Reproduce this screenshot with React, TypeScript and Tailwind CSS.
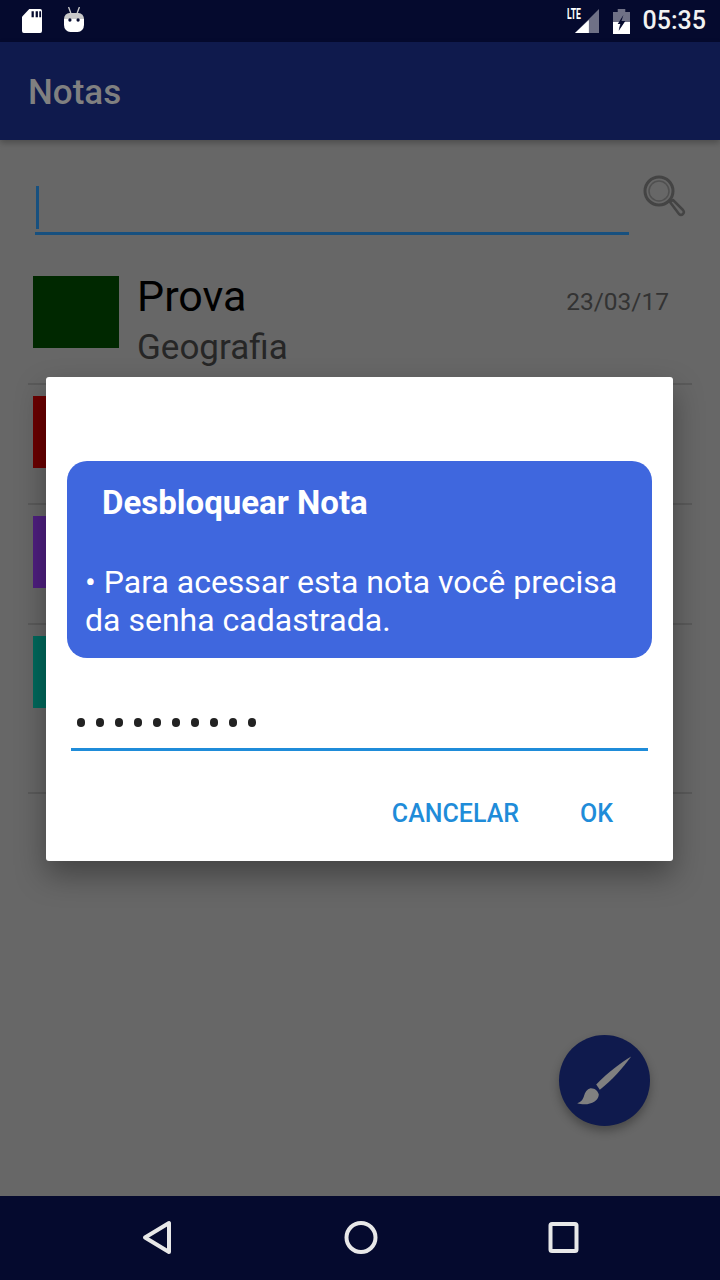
import React from "react";

function Row({ color, title, sub, date, h = "h-[120px]" }: { color: string; title?: string; sub?: string; date?: string; h?: string }) {
  return (
    <div className={`${h} mx-[28px] border-b-2 border-[#5a5a5a] flex items-start pt-[11px] pl-[5px]`}>
      <div className={`w-[86px] h-[72px] shrink-0 ${color}`} />
      {title && (
        <div className="ml-[18px] flex-1 flex flex-col">
          <div className="flex justify-between items-start">
            <span className="text-[43px] leading-[47px] mt-[-3px] text-black">{title}</span>
            <span className="text-[24.500px] leading-[28px] mt-[12px] mr-[23px] text-[#333333]">{date}</span>
          </div>
          <span className="text-[35px] leading-[40px] mt-[8px] text-[#262626]">{sub}</span>
        </div>
      )}
    </div>
  );
}

export default function App() {
  return (
    <div className="relative w-[720px] h-[1280px] overflow-hidden flex flex-col bg-[#676767] font-['Roboto',sans-serif]">
      {/* status bar */}
      <div className="h-[42px] shrink-0 bg-[#050a2e] flex items-center pl-[22px] pr-[14px]">
        <svg width="20" height="25" viewBox="0 0 22 26" preserveAspectRatio="none" className="mt-[-1px]">
          <path d="M8 1h12a2 2 0 0 1 2 2v21a2 2 0 0 1-2 2H2a2 2 0 0 1-2-2V9z" fill="#fff" />
          <path d="M10.500 3.500h2.500v6h-2.500zM15 3.500h2.500v6H15zM19 3.500h2v6h-2z" fill="#050a2e" />
        </svg>
        <svg width="20" height="26" viewBox="0 0 22 26" preserveAspectRatio="none" className="ml-[22px] mt-[-2px]">
          <path d="M5 0l2.500 6M17 0l-2.500 6" stroke="#c9c9c9" strokeWidth="1.500" />
          <path d="M0 12a6 6 0 0 1 6-6h10a6 6 0 0 1 6 6H0z" fill="#c9c9c9" />
          <path d="M0 12h22v6a7 7 0 0 1-7 7H7a7 7 0 0 1-7-7z" fill="#fff" />
          <circle cx="6.500" cy="13" r="1.800" fill="#050a2e" />
          <circle cx="15.500" cy="13" r="1.800" fill="#050a2e" />
        </svg>
        <div className="flex-1" />
        <div className="relative w-[32px] h-[26px] mt-[2px]">
          <svg width="24" height="24" viewBox="0 0 26 24" preserveAspectRatio="none" className="absolute right-0 top-0">
            <path d="M26 0v24H0z" fill="#6f7186" />
            <path d="M15 11v13H0z" fill="#fff" />
          </svg>
          <span className="absolute left-0 top-[-2px] text-[14px] leading-[14px] font-bold text-white scale-x-[0.62] origin-left">LTE</span>
        </div>
        <svg width="17" height="25" viewBox="0 0 18 25" preserveAspectRatio="none" className="ml-[14px] mt-[0px]">
          <path d="M5 0h8v3h5v22H0V3h5z" fill="#6f7186" />
          <path d="M0 13h8l-2 8 6-8h6v12H0z" fill="#fff" />
          <path d="M11 6L5 15h3l-2 7 7-10H9z" fill="#050a2e" />
        </svg>
        <span className="ml-[13px] text-[25px] leading-[30px] font-medium text-[#f2f2f2]">05:35</span>
      </div>

      {/* app bar */}
      <div className="h-[98px] shrink-0 bg-[#0f1a4d] flex items-center px-[28px] pt-[3px] shadow-[0_3px_6px_rgba(0,0,0,0.25)]">
        <span className="text-[35px] leading-[40px] font-medium text-[#808080]">Notas</span>
      </div>

      {/* main */}
      <div className="flex-1 flex flex-col">
        <div className="h-[125px] shrink-0 pt-[44px] pl-[35px] pr-[35px] flex items-start">
          <div className="relative w-[594px] shrink-0 h-[48px] border-b-[3px] border-[#17507f] mr-[-3px] box-content">
            <div className="absolute left-[1px] top-[2px] w-[3px] h-[43px] bg-[#17507f]" />
          </div>
          <svg width="46" height="46" viewBox="0 0 46 46" fill="none" stroke="#444444" className="ml-[15px] mt-[-11px] shrink-0">
            <circle cx="18" cy="18" r="14" strokeWidth="3" />
            <circle cx="18" cy="18" r="10" strokeWidth="1.500" stroke="#505050" />
            <path d="M29 29l3-2 10 10a3 3 0 0 1 0 4 3 3 0 0 1-4 0z" strokeWidth="2.500" strokeLinejoin="round" />
          </svg>
        </div>
        <Row color="bg-[#002800]" title="Prova" sub="Geografia" date="23/03/17" />
        <Row color="bg-[#6b0000]" />
        <Row color="bg-[#4f1f80]" />
        <Row color="bg-[#00695c]" h="h-[169px]" />
        <div className="flex-1 flex items-end justify-end pr-[70px] pb-[70px]">
          <div className="w-[91px] h-[91px] rounded-full bg-[#0f1a4d] flex items-center justify-center shadow-[0_5px_10px_rgba(0,0,0,0.3)]">
            <svg width="56" height="56" viewBox="0 0 56 56" fill="#808080">
              <path d="M54.200 3.500C45 9 30 20 19.200 31.500l3.600 5.300C34 28 46 15 54.200 3.500z" />
              <path d="M13.500 35.200C18 35 21 38 21.800 41.500 21.500 46 18 50 10.200 51.200 6 51.500 3 51 .2 50.200 3.500 49.500 6 46.500 7 43 8 39 10 36 13.500 35.200z" />
            </svg>
          </div>
        </div>
      </div>

      {/* nav bar */}
      <div className="h-[84px] shrink-0 bg-[#050a2e] flex items-center justify-center pl-[21px]">
        <svg width="460" height="40" viewBox="0 0 460 40" fill="none" stroke="#e8e8e8" strokeWidth="4" strokeLinejoin="round">
          <path d="M28 5v29L4 19.500z" />
          <circle cx="220" cy="19.500" r="14.500" />
          <rect x="409.500" y="6" width="26" height="27" rx="1.500" />
        </svg>
      </div>

      {/* dialog */}
      <div className="absolute left-[46px] top-[377px] w-[627px] h-[484px] bg-white rounded-[3px] shadow-[0_14px_30px_rgba(0,0,0,0.35)] flex flex-col px-[21px]">
        <div className="mt-[84px] w-[585px] h-[197px] shrink-0 rounded-[20px] bg-[#3f67de] text-white pl-[18px] pr-[20px]">
          <div className="pl-[17px] pt-[23px] text-[33px] leading-[38px] font-bold">Desbloquear Nota</div>
          <div className="mt-[41px] text-[32px] leading-[38px] font-normal">• Para acessar esta nota você precisa da senha cadastrada.</div>
        </div>
        <div className="ml-[4px] mt-[45px] w-[577px] h-[48px] shrink-0 border-b-[3px] border-[#1f8cd9] flex items-start pt-[15px] pl-[6px] gap-[11px]">
          {Array.from({ length: 10 }).map((_, i) => (
            <span key={i} className="w-[8px] h-[9px] rounded-full bg-[#222222]" />
          ))}
        </div>
        <div className="flex justify-end items-center mt-[48px] pr-[39px] text-[25px] leading-[30px] font-medium text-[#1f8cd9]">
          <span>CANCELAR</span>
          <span className="ml-[61px]">OK</span>
        </div>
      </div>
    </div>
  );
}
